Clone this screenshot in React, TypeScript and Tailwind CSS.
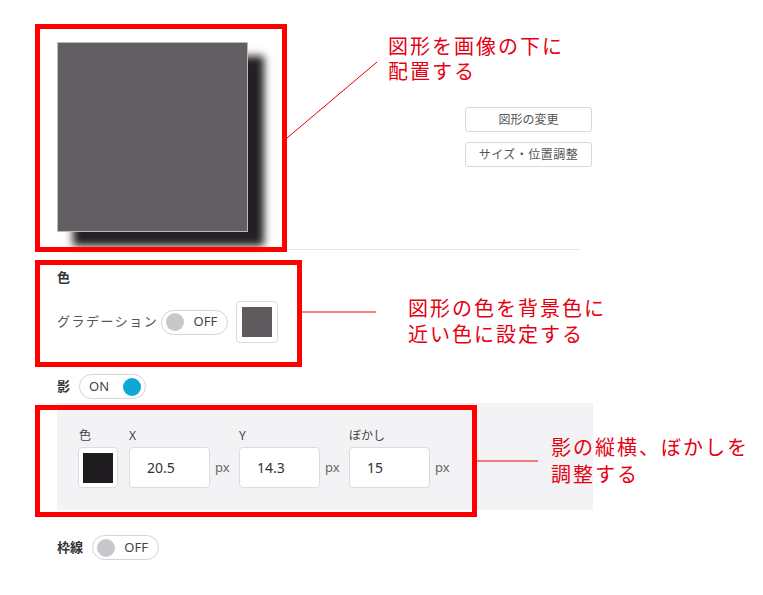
import React from "react";

const font = { fontFamily: '"Noto Sans", "Noto Sans CJK JP", sans-serif' };

function Toggle({ on }: { on: boolean }) {
  return (
    <div className="flex h-[25px] w-[67px] items-center justify-between rounded-full border border-[#d4d4d8] bg-white px-[4px]">
      {on ? (
        <>
          <span className="ml-[5px] text-[13px] text-[#444]">ON</span>
          <span className="h-[18px] w-[18px] rounded-full bg-[#0ea8d6]" />
        </>
      ) : (
        <>
          <span className="h-[18px] w-[18px] rounded-full bg-[#c9c7cc]" />
          <span className="mr-[6px] text-[13px] text-[#444]">OFF</span>
        </>
      )}
    </div>
  );
}

function NumField({ label, value }: { label: string; value: string }) {
  return (
    <div className="flex shrink-0 flex-col">
      <span className="h-[16px] text-[12px] leading-[16px] text-[#444]">{label}</span>
      <div className="mt-[3px] flex items-center">
        <div className="flex h-[41px] w-[81px] items-center rounded-[4px] border border-[#dcdce0] bg-white pl-[17px] text-[14px] text-[#333]">
          {value}
        </div>
        <span className="ml-[5px] w-[13px] text-[13px] text-[#666]">px</span>
      </div>
    </div>
  );
}

export default function App() {
  return (
    <div className="relative h-[595px] w-[763px] overflow-hidden bg-white" style={font}>
      <div className="flex flex-col pl-[57px]">
        {/* preview */}
        <div className="flex h-[250px] w-[523px] border-b border-[#e6e6e8]">
          <div className="mt-[42px] h-[190px] w-[191px] shrink-0 border border-[#bdbabd] bg-[#625e61] shadow-[16px_14px_8px_#231f22]" />
          <div className="ml-[217px] mt-[107px] flex shrink-0 flex-col gap-[10px]">
            <div className="flex h-[25px] w-[127px] items-center justify-center rounded-[3px] border border-[#d9d9dc] bg-white text-[12px] text-[#555]">
              図形の変更
            </div>
            <div className="flex h-[25px] w-[127px] items-center justify-center rounded-[3px] border border-[#d9d9dc] bg-white text-[12px] tracking-[0.5px] text-[#555]">
              サイズ・位置調整
            </div>
          </div>
        </div>

        {/* color */}
        <div className="mt-[17px] h-[20px] text-[13px] font-bold leading-[20px] text-[#333]">色</div>
        <div className="mt-[14px] flex items-center">
          <span className="text-[13px] tracking-[1.5px] text-[#555]">グラデーション</span>
          <div className="ml-[3px]">
            <Toggle on={false} />
          </div>
          <div className="ml-[8px] flex h-[42px] w-[42px] items-center justify-center rounded-[4px] border border-[#dcdce0] bg-white">
            <div className="h-[30px] w-[30px] bg-[#5e5a5d]" />
          </div>
        </div>

        {/* shadow */}
        <div className="mt-[31px] flex items-center">
          <span className="text-[13px] font-bold text-[#333]">影</span>
          <div className="ml-[9px]">
            <Toggle on={true} />
          </div>
        </div>

        <div className="mt-[4px] flex h-[107px] w-[536px] items-start gap-[11px] bg-[#f3f3f6] pl-[21px] pt-[25px]">
          <div className="flex shrink-0 flex-col">
            <span className="h-[16px] pl-[1px] text-[12px] leading-[16px] text-[#444]">色</span>
            <div className="mt-[3px] flex h-[41px] w-[40px] items-center justify-center rounded-[4px] border border-[#dcdce0] bg-white">
              <div className="h-[30px] w-[30px] bg-[#1f1c20]" />
            </div>
          </div>
          <NumField label="X" value="20.5" />
          <NumField label="Y" value="14.3" />
          <NumField label="ぼかし" value="15" />
        </div>

        {/* border */}
        <div className="mt-[25px] flex items-center">
          <span className="text-[13px] font-bold text-[#333]">枠線</span>
          <div className="ml-[9px]">
            <Toggle on={false} />
          </div>
        </div>
      </div>

      {/* annotations */}
      <div className="absolute left-[35px] top-[24px] h-[228px] w-[252px] border-[5px] border-[#f00]" />
      <div className="absolute left-[35px] top-[260px] h-[107px] w-[267px] border-[5px] border-[#f00]" />
      <div className="absolute left-[35px] top-[405px] h-[112px] w-[442px] border-[5px] border-[#f00]" />

      <svg className="pointer-events-none absolute left-0 top-0" width="763" height="595">
        <line x1="287" y1="138" x2="377" y2="62" stroke="#e00" strokeWidth="1" />
        <line x1="302" y1="312" x2="376" y2="312" stroke="#e00" strokeWidth="1" />
        <line x1="477" y1="461" x2="538" y2="461" stroke="#e00" strokeWidth="1" />
      </svg>

      <div className="absolute left-[388px] top-[34px] text-[20px] leading-[25px] tracking-[2px] text-[#e60012]">
        図形を画像の下に
        <br />
        配置する
      </div>
      <div className="absolute left-[408px] top-[296px] text-[20px] leading-[26px] tracking-[2px] text-[#e60012]">
        図形の色を背景色に
        <br />
        近い色に設定する
      </div>
      <div className="absolute left-[551px] top-[434px] text-[20px] leading-[27px] tracking-[2px] text-[#e60012]">
        影の縦横、ぼかしを
        <br />
        調整する
      </div>
    </div>
  );
}
